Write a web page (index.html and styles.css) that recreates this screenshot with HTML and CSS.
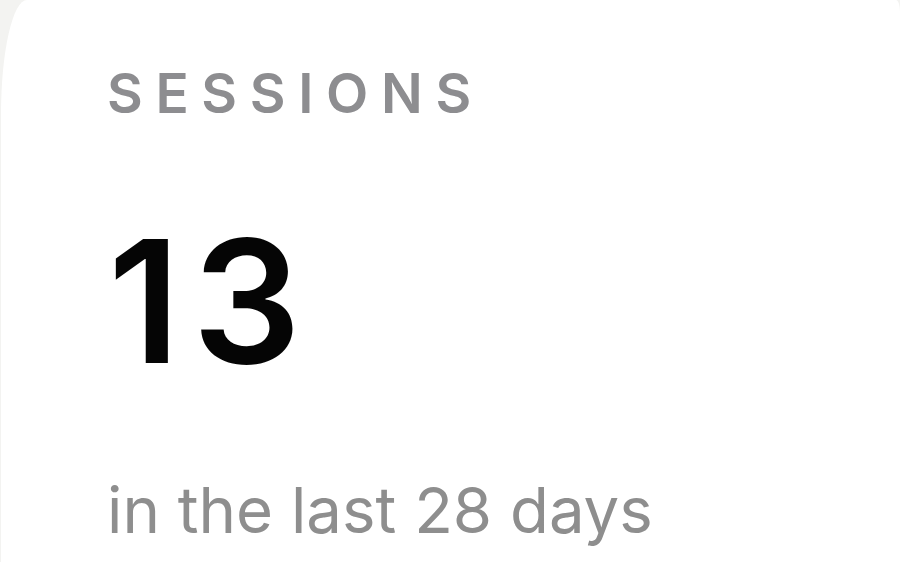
FILE: index.html
```html
<!DOCTYPE html>
<html>
<head>
<meta charset="utf-8">
<link rel="stylesheet" href="styles.css">
</head>
<body>
<div class="card">
  <div class="label">SESSIONS</div>
  <div class="value">13</div>
  <div class="caption">in the last 28 days</div>
</div>
</body>
</html>
```
FILE: styles.css
```css
html, body {
  margin: 0;
  padding: 0;
  width: 900px;
  height: 562px;
  overflow: hidden;
  background: #f3f3f1;
  font-family: Inter, "Noto Sans", sans-serif;
}
.card {
  margin: 0 0 0 1px;
  height: 562px;
  background: #ffffff;
  border-top-left-radius: 26px 115px;
  border-top-right-radius: 4px 12px;
  padding: 66px 0 0 106px;
  box-sizing: border-box;
  display: flex;
  flex-direction: column;
}
.label {
  font-size: 55px;
  font-weight: 600;
  letter-spacing: 0.23em;
  color: #8d8d90;
  line-height: 1;
}
.value {
  font-size: 171px;
  font-weight: 600;
  color: #050505;
  line-height: 1;
  margin-top: 94px;
  margin-left: 1px;
  letter-spacing: 0.07em;
}
.caption {
  font-size: 63.5px;
  font-weight: 400;
  color: #8e8e8e;
  line-height: 1;
  margin-top: 92px;
}
```
